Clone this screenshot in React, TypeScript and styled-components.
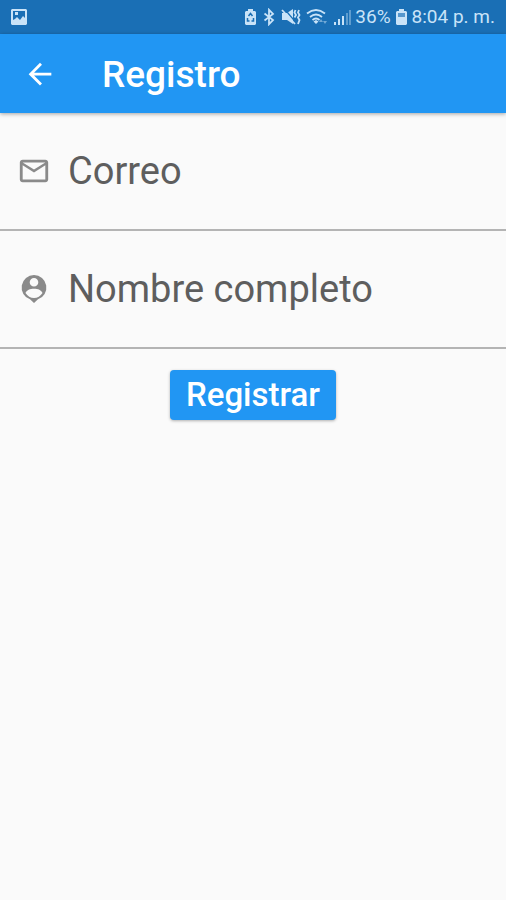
import React from "react";
import styled, { createGlobalStyle } from "styled-components";

const GlobalStyle = createGlobalStyle`
  *, *::before, *::after { box-sizing: border-box; }
  body {
    margin: 0;
    background: #fafafa;
    font-family: Roboto, "Liberation Sans", sans-serif;
  }
`;

const Screen = styled.div`
  display: flex;
  flex-direction: column;
  min-height: 100vh;
  background: #fafafa;
`;

const StatusBar = styled.div`
  display: flex;
  align-items: center;
  justify-content: space-between;
  height: 34px;
  padding: 0 11px 0 10px;
  background: #1a6fb5;
  color: #c9e3f8;
  font-size: 19px;
  line-height: 20px;
  white-space: nowrap;
`;

const StatusGroup = styled.div<{ $gap: number }>`
  display: flex;
  align-items: center;
  gap: ${({ $gap }) => $gap}px;
`;

const AppBar = styled.header`
  display: flex;
  align-items: center;
  gap: 38px;
  height: 79px;
  padding: 0 16px;
  background: #2196f3;
  color: #fff;
  box-shadow: 0 1px 4px rgba(0, 0, 0, 0.35);
`;

const BackButton = styled.button`
  display: flex;
  align-items: center;
  justify-content: center;
  width: 48px;
  height: 48px;
  padding: 0;
  border: 0;
  background: transparent;
  color: inherit;
  cursor: pointer;
`;

const Title = styled.h1`
  margin: 0;
  padding-top: 2px;
  font-size: 37px;
  font-weight: 500;
  line-height: 44px;
`;

const Form = styled.form`
  display: flex;
  flex-direction: column;
  align-items: center;
`;

const Field = styled.label`
  display: flex;
  align-items: center;
  gap: 17px;
  width: 100%;
  height: 118px;
  padding: 0 17px;
  border-bottom: 2px solid #b4b4b4;
  color: #8a8a8a;
`;

const FieldInput = styled.input`
  flex: 1;
  min-width: 0;
  padding: 0;
  border: 0;
  outline: 0;
  background: transparent;
  color: #212121;
  font-family: inherit;
  font-size: 38px;
  line-height: 48px;

  &::placeholder {
    color: #5e5e5e;
    opacity: 1;
  }
`;

const SubmitButton = styled.button`
  height: 50px;
  margin-top: 21px;
  padding: 0 16px;
  border: 0;
  border-radius: 4px;
  background: #2196f3;
  box-shadow: 0 1px 3px rgba(0, 0, 0, 0.3);
  color: #fff;
  font-family: inherit;
  font-size: 33px;
  font-weight: 500;
  line-height: 50px;
  cursor: pointer;
`;

const Icon = styled.svg`
  display: block;
  flex: none;
  fill: currentColor;
`;

const PictureIcon = () => (
  <Icon width="18" height="18" viewBox="0 0 18 18" aria-hidden="true">
    <path
      fillRule="evenodd"
      d="M2 1h14l1 1v14l-1 1H2l-1-1V2zM3 3v9l2-1 2-2 3 3 3-4 2 2V3zM5 4h3v3H5z"
    />
  </Icon>
);

const BatterySaverIcon = () => (
  <Icon width="13" height="18" viewBox="0 0 13 18" aria-hidden="true">
    <path d="M4 1h5v2h2l1 1v12l-1 1H2l-1-1V4l1-1h2z" />
    <path
      d="m4.500 8 2-2.500 2 2.500M3.500 10v3h2M9.500 10v3h-2"
      fill="none"
      stroke="#1a6fb5"
      strokeWidth="1.5"
    />
  </Icon>
);

const BluetoothIcon = () => (
  <Icon width="14" height="18" viewBox="0 0 14 18" aria-hidden="true">
    <path
      d="M2.500 5.500 11 12l-4 4.200V1.800L11 6l-8.500 6.500"
      fill="none"
      stroke="currentColor"
      strokeWidth="1.800"
    />
  </Icon>
);

const VibrateIcon = () => (
  <Icon width="20" height="18" viewBox="0 0 20 18" aria-hidden="true">
    <path d="M1 5h5l6-4v15l-6-4H1z" />
    <path d="m3.500 1 11 13" stroke="#1a6fb5" strokeWidth="1.200" />
    <path
      d="m1 2 13 14M14.500 2l-1 2.500 1.500 2.500-1.500 2.500M18 2l-1 2.500L18.500 7 17 9.500l1.500 2.500-1.500 4"
      fill="none"
      stroke="currentColor"
      strokeWidth="1.800"
    />
  </Icon>
);

const WifiIcon = () => (
  <Icon width="22" height="18" viewBox="0 0 22 18" aria-hidden="true">
    <path
      d="M1 5.500q9-7 18 0M4 9q6-5 12 0M6.500 12q3.500-3 7 0"
      fill="none"
      stroke="currentColor"
      strokeWidth="1.800"
    />
    <path d="m7.500 13.500 2.500-1.500 2.500 1.500L10 16z" />
    <path d="m13 14 2-3 2 3zM17 13h4l-2 3z" opacity="0.500" />
  </Icon>
);

const SignalIcon = () => (
  <Icon width="18" height="18" viewBox="0 0 18 18" aria-hidden="true">
    <path d="M1 14h2v3H1zM5 11h2v6H5zM9 8h2v9H9z" />
    <path d="M13 5h2v12h-2zM16 2h2v15h-2z" opacity="0.400" />
  </Icon>
);

const BatteryIcon = () => (
  <Icon width="13" height="18" viewBox="0 0 13 18" aria-hidden="true">
    <path
      fillRule="evenodd"
      d="M4 1h5v2h2l1 1v12l-1 1H2l-1-1V4l1-1h2zM3 5v4h7V5z"
    />
    <path d="M3 5h7v4H3z" opacity="0.350" />
  </Icon>
);

const ArrowBackIcon = () => (
  <Icon width="34" height="34" viewBox="0 0 24 24" aria-hidden="true">
    <path d="M20 11.100H7.800l5.600-5.600L12 4.100l-8 8 8 8 1.400-1.400-5.600-5.600H20z" />
  </Icon>
);

const MailIcon = () => (
  <Icon width="34" height="34" viewBox="0 0 24 24" aria-hidden="true">
    <path d="M20 4H4c-1.100 0-2 .9-2 2v12c0 1.100.9 2 2 2h16c1.100 0 2-.9 2-2V6c0-1.100-.9-2-2-2zm0 14H4V8l8 5 8-5v10zm-8-7L4 6h16l-8 5z" />
  </Icon>
);

const PersonPinIcon = () => (
  <Icon width="34" height="34" viewBox="0 0 34 34" aria-hidden="true">
    <path
      fillRule="evenodd"
      d="M17 3a12.500 12.500 0 0 1 4 24.300L17 31l-4-3.700A12.500 12.500 0 0 1 17 3zM17 6a4.300 4.300 0 1 0 0 8.600 4.300 4.300 0 1 0 0-8.600zM8.500 21c2 3 5 5 8.500 5s6.500-2 8.500-5c-1-2.800-4.500-4.300-8.500-4.300s-7.500 1.500-8.500 4.300z"
    />
  </Icon>
);

export default function App() {
  return (
    <>
      <GlobalStyle />
      <Screen>
        <StatusBar>
          <PictureIcon />
          <StatusGroup $gap={4}>
            <StatusGroup $gap={5}>
              <BatterySaverIcon />
              <BluetoothIcon />
              <VibrateIcon />
              <WifiIcon />
              <SignalIcon />
            </StatusGroup>
            <span>36%</span>
            <BatteryIcon />
            <span>8:04 p. m.</span>
          </StatusGroup>
        </StatusBar>
        <AppBar>
          <BackButton type="button" aria-label="Volver">
            <ArrowBackIcon />
          </BackButton>
          <Title>Registro</Title>
        </AppBar>
        <Form onSubmit={(event: React.FormEvent) => event.preventDefault()}>
          <Field>
            <MailIcon />
            <FieldInput type="email" placeholder="Correo" aria-label="Correo" />
          </Field>
          <Field>
            <PersonPinIcon />
            <FieldInput type="text" placeholder="Nombre completo" aria-label="Nombre completo" />
          </Field>
          <SubmitButton type="submit">Registrar</SubmitButton>
        </Form>
      </Screen>
    </>
  );
}
